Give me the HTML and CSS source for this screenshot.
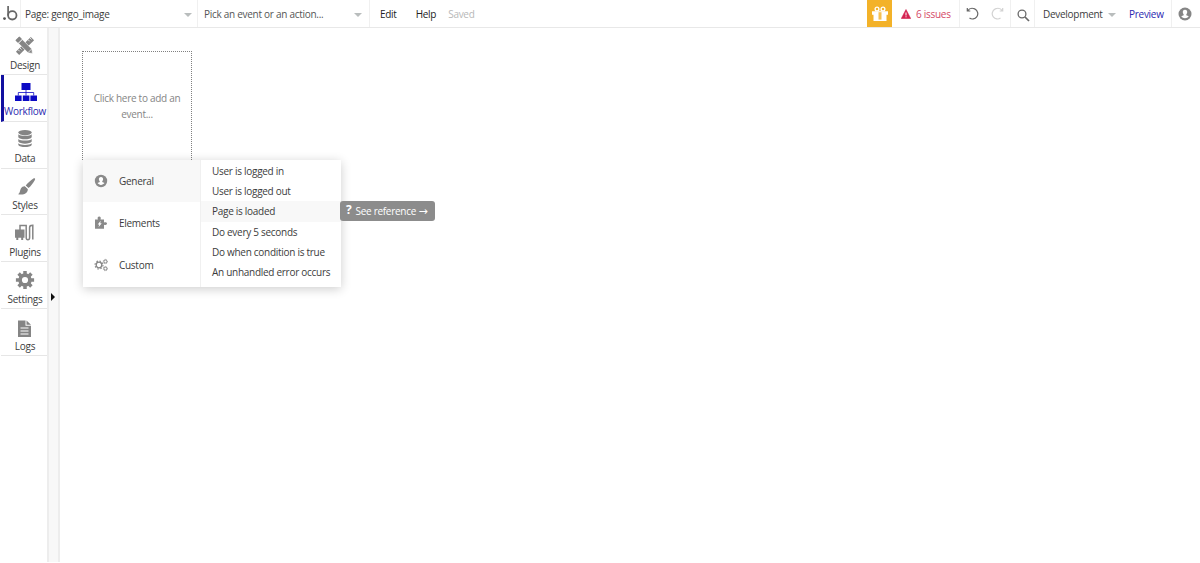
FILE: index.html
```html
<!DOCTYPE html>
<html lang="en">
<head>
<meta charset="utf-8">
<title>Workflow editor</title>
<link rel="stylesheet" href="styles.css">
</head>
<body>
<header class="topbar">
  <div class="cell logo">
    <svg width="16" height="17" viewBox="0 0 16 17"><circle cx="1.500" cy="13.600" r="1.400" fill="#555"/><path d="M5.100 1v9.400" stroke="#666" stroke-width="1.700" fill="none"/><circle cx="9.300" cy="10.300" r="4.200" fill="none" stroke="#666" stroke-width="1.800"/></svg>
  </div>
  <div class="cell page-picker"><span>Page: gengo_image</span><i class="caret"></i></div>
  <div class="cell event-picker"><span>Pick an event or an action...</span><i class="caret"></i></div>
  <nav class="menu"><span class="edit">Edit</span><span class="help">Help</span><span class="saved">Saved</span></nav>
  <div class="gift">
    <svg width="18" height="16" viewBox="0 0 18 16"><g fill="#fff"><path d="M1 5.200h16v3.600H1zM2.500 8.800h13V15h-13z"/></g><g fill="none" stroke="#fff" stroke-width="1.300"><circle cx="6" cy="3" r="1.900"/><circle cx="12" cy="3" r="1.900"/></g><path d="M7.600 6.200h2.800v7.400H7.600z" fill="#f3b229"/><path d="M8.500 3h1v12h-1z" fill="#fff" opacity=".4"/></svg>
  </div>
  <div class="cell issues">
    <svg width="10" height="10" viewBox="0 0 10 10"><path d="M5 .5 9.700 9.500H.3z" fill="#d42351" stroke="#d42351" stroke-width=".6" stroke-linejoin="round"/><path d="M5 3.500v3M5 7.300v1" stroke="#fff" stroke-width="1"/></svg>
    <span>6 issues</span>
  </div>
  <div class="cell history">
    <svg width="13" height="13" viewBox="0 0 13 13" fill="none" stroke="#666" stroke-width="1.200"><path d="M1.300 1v3h3M1.500 3.800C3.400 1.300 6.300.8 8.700 1.900c3.200 1.600 4 5.400 2 8-1.700 2.300-5 2.800-7.200 1.100"/></svg>
    <svg width="13" height="13" viewBox="0 0 13 13" fill="none" stroke="#d2d2d2" stroke-width="1.200"><path d="M11.700 1v3h-3M11.500 3.800C9.600 1.300 6.700.8 4.300 1.900c-3.200 1.600-4 5.400-2 8 1.700 2.300 5 2.800 7.200 1.100"/></svg>
  </div>
  <div class="cell search">
    <svg width="13" height="13" viewBox="0 0 13 13" fill="none" stroke="#686868"><circle cx="5" cy="5" r="3.900" stroke-width="1.300"/><path d="m8 8 4 4" stroke-width="1.700"/></svg>
  </div>
  <div class="version"><span>Development</span><i class="caret"></i></div>
  <a class="preview">Preview</a>
  <div class="account">
    <svg width="14" height="14" viewBox="0 0 14 14"><circle cx="7" cy="7" r="6.500" fill="#858585"/><path d="M7 2.800c1.600 0 2.300 1 2.200 2.500-.1 1.100-.5 1.700-.9 2.200v.7l2.500 1.100c-.9 1.200-2.300 1.900-3.800 1.900s-2.900-.7-3.800-1.900l2.500-1.100v-.7c-.4-.5-.8-1.100-.9-2.200C4.700 3.800 5.400 2.800 7 2.800z" fill="#fff"/></svg>
  </div>
</header>
<div class="workspace">
  <aside class="rail">
    <div class="tab">
      <svg width="20" height="20" viewBox="0 0 20 20"><g transform="rotate(45 10 10)"><path d="M10-.5v21" stroke="#858585" stroke-width="4.600"/><path d="M-.8 10H3" stroke="#858585" stroke-width="5.400"/></g><g transform="rotate(-45 10 10)"><path d="M7.300 3.500h5.400V17L10 20.500 7.300 17z" fill="#858585" stroke="#fff" stroke-width=".6" transform="rotate(0 10 10)"/><path d="M7.300-.5h5.400v3H7.300z" fill="#858585"/><path d="M7.500 16.800h5" stroke="#fff" stroke-width=".7"/></g><path d="m15 2 1.500 1.500M13.200 3.800l1.500 1.500M5 12l1.500 1.500M3.200 13.800l1.500 1.500" stroke="#fff" stroke-width=".8"/></svg>
      <span>Design</span>
    </div>
    <div class="tab active">
      <svg width="22" height="20" viewBox="0 0 22 20"><path d="M6.500 1h9v7h-9zM0 13.500h6.600V19H0zM7.800 13.500h6.600V19H7.800zM15.400 13.500H22V19h-6.600z" fill="#0c0ac4"/><path d="M11 8v5.500M3.300 13.500v-3h15.400v3" fill="none" stroke="#0c0ac4" stroke-width=".8"/></svg>
      <span>Workflow</span>
    </div>
    <div class="tab">
      <svg width="16" height="20" viewBox="0 0 16 20"><g fill="#858585"><ellipse cx="8" cy="3.600" rx="6.700" ry="2.600"/><path d="M1.300 5.200c1.500 2.200 11.900 2.200 13.400 0v3c-1.500 2.800-11.900 2.800-13.400 0zM1.300 9.900c1.500 2.200 11.900 2.200 13.400 0v2.700c-1.500 2.800-11.900 2.800-13.400 0zM1.300 14.300c1.500 2.200 11.900 2.200 13.400 0V16c-1.500 2.800-11.900 2.800-13.400 0z"/></g></svg>
      <span>Data</span>
    </div>
    <div class="tab styles">
      <svg width="20" height="20" viewBox="0 0 20 20"><path d="M18.700 2.300c.8.500.4 1.300-.1 2.200-1.800 3.200-4 5.900-6.200 7.600L9.700 9.500C11.900 7 14.700 4.200 17.400 2.500c.5-.3.900-.4 1.300-.2zM8.900 10.200l2.900 2.700c.3 4-3.700 6.300-9.700 5.300 2.300-1.400 1.600-3.400 2.800-5.600 1-1.800 2.600-2.600 4-2.400z" fill="#858585"/><path d="m9 9.700 3.200 2.900" stroke="#fff" stroke-width=".6"/></svg>
      <span>Styles</span>
    </div>
    <div class="tab plugins">
      <svg width="20" height="20" viewBox="0 0 20 20"><path d="M1 6.500h9.500v8.300H1zM2.300 14h2v3h-2zM7.200 14h2v3h-2z" fill="#858585"/><path d="M6 7V2.500h6.200V14.500c0 3 3.400 3 3.400 0V4.500c0-1.800.8-2.300 3.200-2.300v14.300" fill="none" stroke="#858585" stroke-width="1.500"/></svg>
      <span>Plugins</span>
    </div>
    <div class="tab">
      <svg width="20" height="20" viewBox="0 0 20 20"><circle cx="10" cy="10" r="4.900" fill="none" stroke="#858585" stroke-width="3.600"/><path d="M10 .9v3.500M10 15.600v3.500M.9 10h3.500M15.600 10h3.500M3.600 3.600l2.400 2.400M14 14l2.400 2.400M3.600 16.400 6 14M14 6l2.400-2.400" stroke="#858585" stroke-width="3.500"/></svg>
      <span>Settings</span>
    </div>
    <div class="tab logs">
      <svg width="16" height="20" viewBox="0 0 16 20"><path d="M2 3.500h7.500v5.200H15V20H2zM10.500 3.500 15 7.800h-4.500z" fill="#858585"/><path d="M4.500 11h8M4.500 14h8M4.500 17h8" stroke="#fff" stroke-width="1"/></svg>
      <span>Logs</span>
    </div>
  </aside>
  <div class="gutter"><i class="expand"></i></div>
  <main class="canvas">
    <div class="new-event">Click here to add an<br>event...</div>
    <div class="popup">
      <div class="groups">
        <div class="group selected"><svg width="14" height="14" viewBox="0 0 14 14"><circle cx="7" cy="7" r="6.200" fill="#8a8a8a"/><path d="M7 3c1.500 0 2.200 1 2.100 2.300-.1 1.100-.5 1.600-.9 2.100v.7l2.300 1c-.9 1.200-2.100 1.800-3.500 1.800S4.400 10.300 3.500 9.100l2.300-1v-.7c-.4-.5-.8-1-.9-2.100C4.800 4 5.500 3 7 3z" fill="#fff"/></svg><span>General</span></div>
        <div class="group"><svg width="14" height="14" viewBox="0 0 14 14"><path d="M1 3.500h2.900C3.200 1.700 3.900.6 5.200.6S7.200 1.700 6.500 3.500H10v3c1.700-.8 3-.2 3 1.100s-1.300 1.900-3 1.100v4H1z" fill="#8a8a8a"/><path d="M6.700 4.700 3.700 8.500h1.500L4.500 11.300l3.200-4H6.200z" fill="#fff"/></svg><span>Elements</span></div>
        <div class="group"><svg width="14" height="14" viewBox="0 0 14 14"><g fill="none" stroke="#858585"><circle cx="5" cy="7" r="2.800" stroke-width="1.300"/><circle cx="5" cy="7" r="4" stroke-width="1.100" stroke-dasharray="1.570"/><circle cx="11.400" cy="3.500" r="1.500"/><circle cx="11.400" cy="3.500" r="2.200" stroke-width=".7" stroke-dasharray=".86"/><circle cx="11.400" cy="10.600" r="1.500"/><circle cx="11.400" cy="10.600" r="2.200" stroke-width=".7" stroke-dasharray=".86"/></g></svg><span>Custom</span></div>
      </div>
      <div class="events">
        <div class="event">User is logged in</div>
        <div class="event">User is logged out</div>
        <div class="event hover">Page is loaded</div>
        <div class="event">Do every 5 seconds</div>
        <div class="event">Do when condition is true</div>
        <div class="event">An unhandled error occurs</div>
      </div>
      <div class="reference"><b>?</b><span>See reference <span class="arrow">→</span></span></div>
    </div>
  </main>
</div>
</body>
</html>
```
FILE: styles.css
```css
* { box-sizing: border-box; }
body {
  margin: 0;
  height: 563px;
  overflow: hidden;
  background: #fff;
  color: #3c3c3c;
  font: 10px/14px "Open Sans", "Noto Sans", sans-serif;
  letter-spacing: -.28px;
}
svg { display: block; flex: none; }
span, a { white-space: nowrap; }
.topbar {
  display: flex;
  height: 28px;
  border-bottom: 1px solid #e8e8e8;
  align-items: stretch;
}
.topbar > * { display: flex; align-items: center; flex: none; }
.cell { border-right: 1px solid #f0f0f0; }
.logo { width: 21px; padding-left: 3px; }
.page-picker { width: 177px; padding: 0 5px 0 4px; justify-content: space-between; }
.event-picker { width: 172px; padding: 0 7px 0 6px; justify-content: space-between; color: #555; }
.caret {
  border: 4px solid transparent;
  border-top-color: #b9bdbd;
  border-bottom: 0;
  margin-top: 2px;
}
.menu { width: 497px; padding-left: 10px; color: #222; }
.help { margin-left: 19px; }
.menu .saved { margin-left: 12px; color: #b8b8b8; }
.gift { width: 25px; background: #f3b229; justify-content: center; }
.issues { width: 68px; padding-left: 9px; gap: 5px; color: #d44866; }
.history { width: 51px; padding-left: 6px; gap: 12px; }
.search { width: 24px; padding: 3px 0 0 6px; }
.version { width: 86px; padding-left: 8px; gap: 5px; }
.preview { width: 51px; padding-left: 8px; color: #2b28b0; border-right: 1px solid #f0f0f0; }
.account { padding-left: 6px; }
.workspace { display: flex; height: 534px; }
.rail { width: 47px; padding-left: 1px; }
.tab {
  height: 46.850px;
  border-bottom: 1px solid #e6e6e6;
  display: flex;
  flex-direction: column;
  align-items: center;
  padding: 7.500px 0 0 2px;
  gap: 2px;
}
.active { border-left: 3px solid #1210a0; padding-left: 0; color: #2b28b0; }
.active span { margin-left: -1px; }
.plugins svg, .logs svg { margin-left: -2px; }
.styles svg { margin-left: 2px; }
.gutter {
  width: 13px;
  border: solid #ededed;
  border-width: 0 2px;
  background: #f8f8f8;
  position: relative;
}
.expand {
  position: absolute;
  left: 2px;
  top: 265px;
  border: 4px solid transparent;
  border-left-color: #111;
  border-right: 0;
}
.canvas { padding: 23px 0 0 22px; }
.new-event {
  width: 110px;
  height: 109px;
  border: 1px dotted #808080;
  border-bottom: 0;
  padding-top: 38px;
  text-align: center;
  line-height: 16px;
  color: #858585;
}
.popup {
  position: relative;
  display: flex;
  width: 258px;
  height: 127px;
  background: #fff;
  box-shadow: 0 2px 10px rgba(0, 0, 0, .2);
  margin-left: 1px;
}
.groups { width: 118px; border-right: 1px solid #f0f0f0; }
.group { height: 42.200px; padding-left: 11px; display: flex; align-items: center; gap: 11px; }
.selected, .hover { background: #f8f8f8; }
.events { flex: 1; padding-top: 1px; }
.event { height: 20.200px; line-height: 20px; padding-left: 11px; white-space: nowrap; }
.reference {
  position: absolute;
  left: 257px;
  top: 41px;
  width: 95px;
  height: 20px;
  border-radius: 3px;
  background: #8c8c8c;
  color: #fff;
  display: flex;
  align-items: center;
  padding-left: 6px;
  gap: 4px;
}
.reference b { font-size: 12px; margin-top: -3px; }
.arrow { font-family: "DejaVu Sans", sans-serif; font-size: 11px; line-height: 10px; }
```
